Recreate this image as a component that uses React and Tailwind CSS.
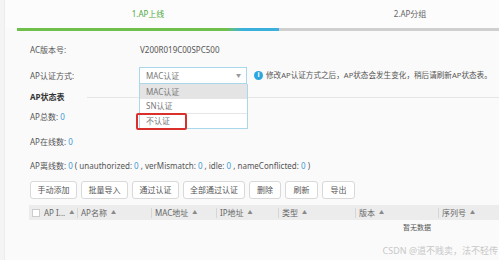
import React from "react";

const Z = ({ children }) => <span className="text-[#3c9ad6]">{children}</span>;

const Btn = ({ children, w }) => (
  <div
    className={`h-[18px] ${w} flex items-center justify-center rounded-[3px] border border-[#d9d9d9] bg-white text-[8px] text-[#555]`}
  >
    {children}
  </div>
);

const Col = ({ children, w, sep = true }) => (
  <div className={`${w} flex h-full shrink-0 items-center`}>
    {sep && <div className="mr-[3px] h-[10px] w-px bg-[#d6d6d6]" />}
    <span>{children}</span>
    <span className="ml-[4px] text-[5px] text-[#888]">▲</span>
  </div>
);

export default function App() {
  return (
    <div
      className="relative flex h-[260px] w-[499px] overflow-hidden bg-[#fafafa] text-[#555]"
      style={{ fontFamily: '"Noto Sans", "Noto Sans CJK SC", sans-serif' }}
    >
      <div className="w-[5px] shrink-0 border-r border-[#ececec] bg-[#f4f4f4]" />
      <div className="flex min-w-0 flex-1 flex-col">
        {/* steps */}
        <div className="flex h-[28px] items-center bg-[#fcfcfc]">
          <div className="ml-[12px] w-[262px] shrink-0 text-center text-[8px] text-[#4eaa3c]">1.AP上线</div>
          <div className="w-[262px] shrink-0 text-center text-[8px] text-[#666]">2.AP分组</div>
        </div>
        <div className="ml-[12px] flex h-[3px]">
          <div className="h-full w-[262px] shrink-0 bg-gradient-to-r from-[#6fc04a] from-[80%] to-[#3cb0dc] to-[86%]" />
          <div className="h-full flex-1 bg-[#cfcfcf]" />
        </div>

        <div className="flex flex-col pl-[25px] text-[8px]">
          <div className="mt-[11px] flex h-[16px] items-center">
            <span className="w-[110px]">AC版本号:</span>
            <span>V200R019C00SPC500</span>
          </div>
          <div className="relative mt-[9px] flex h-[17px] items-center whitespace-nowrap">
            <span className="w-[109px] shrink-0">AP认证方式:</span>
            <div className="flex h-[17px] w-[108px] shrink-0 items-center justify-between border border-[#a9d7ec] bg-white pl-[6px] pr-[5px] text-[#777]">
              <span>MAC认证</span>
              <span className="text-[5px] text-[#999]">▼</span>
            </div>
            <div className="ml-[7px] flex h-[9px] w-[9px] shrink-0 items-center justify-center rounded-full bg-[#2ca6de] text-[7px] font-bold text-white">
              i
            </div>
            <span className="ml-[3px] text-[7.6px] text-[#555]">修改AP认证方式之后，AP状态会发生变化，稍后请刷新AP状态表。</span>
          </div>
          <div className="mt-[5px] flex h-[16px] items-center">
            <span className="font-bold text-[#333]">AP状态表</span>
            <div className="ml-[22px] h-px flex-1 bg-[#e6e6e6]" />
          </div>
          <div className="mt-[4px] flex h-[16px] items-center">
            AP总数:&nbsp;<Z>0</Z>
          </div>
          <div className="mt-[9px] flex h-[16px] items-center">
            AP在线数:&nbsp;<Z>0</Z>
          </div>
          <div className="mt-[8px] flex h-[16px] items-center whitespace-pre">
            AP离线数: <Z>0</Z> ( unauthorized: <Z>0</Z> , verMismatch: <Z>0</Z> , idle: <Z>0</Z> , nameConflicted: <Z>0</Z> )
          </div>
          <div className="mt-[7px] flex gap-[4px]">
            <Btn w="w-[47px]">手动添加</Btn>
            <Btn w="w-[47px]">批量导入</Btn>
            <Btn w="w-[47px]">通过认证</Btn>
            <Btn w="w-[62px]">全部通过认证</Btn>
            <Btn w="w-[32px]">删除</Btn>
            <Btn w="w-[33px]">刷新</Btn>
            <Btn w="w-[33px]">导出</Btn>
          </div>
          <div className="-ml-[1px] mt-[6px] flex h-[15px] items-center bg-[#ececec] text-[8px] text-[#666]">
            <div className="ml-[3px] mr-[4px] h-[8px] w-[8px] shrink-0 border border-[#ccc] bg-white" />
            <Col w="w-[33px]" sep={false}>AP I...</Col>
            <Col w="w-[74px]">AP名称</Col>
            <Col w="w-[65px]">MAC地址</Col>
            <Col w="w-[62px]">IP地址</Col>
            <Col w="w-[77px]">类型</Col>
            <Col w="w-[83px]">版本</Col>
            <Col w="w-[60px]">序列号</Col>
          </div>
          <div className="flex h-[17px] items-center pl-[373px] text-[7px] text-[#555]">暂无数据</div>
          <div className="mt-[7px] flex justify-end pr-[1px] text-[9px] text-[#c8c8c8]">CSDN @道不贱卖，法不轻传</div>
        </div>
      </div>

      {/* dropdown overlay */}
      <div className="absolute left-[139px] top-[84px] w-[109px] border border-[#a9d7ec] border-t-0 bg-white text-[8px] text-[#777]">
        <div className="flex h-[15px] items-center bg-[#e4e4e4] pl-[6px]">MAC认证</div>
        <div className="flex h-[15px] items-center border-b border-[#e6e6e6] pl-[6px]">SN认证</div>
        <div className="flex h-[14px] items-center pl-[6px]">不认证</div>
      </div>
      <div className="absolute left-[136px] top-[113px] h-[17px] w-[51px] rounded-[2px] border-2 border-[#d9302c]" />
    </div>
  );
}
